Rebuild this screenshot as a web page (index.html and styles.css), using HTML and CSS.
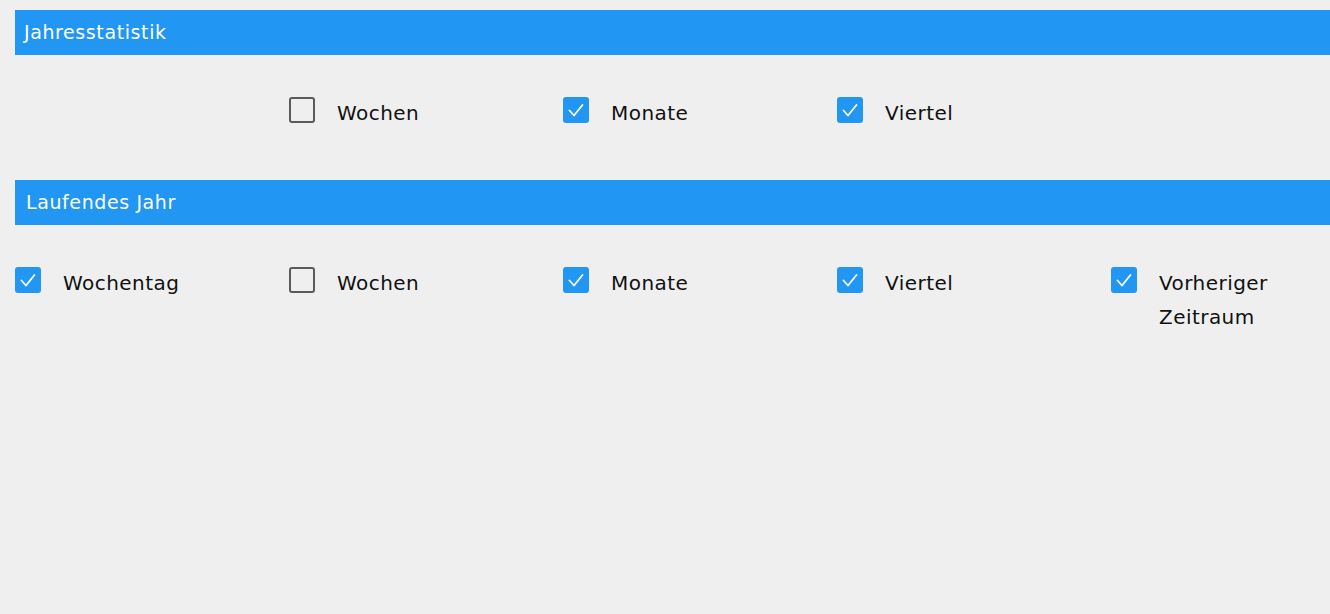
FILE: index.html
```html
<!DOCTYPE html>
<html lang="de">
<head>
<meta charset="utf-8">
<title>Statistik</title>
<link rel="stylesheet" href="styles.css">
</head>
<body>
<div class="page">
  <section class="section">
    <h2 class="section-title">Jahresstatistik</h2>
    <div class="options">
      <div class="option empty"></div>
      <label class="option"><span class="box"></span><span class="label">Wochen</span></label>
      <label class="option"><span class="box checked"><svg viewBox="0 0 26 26"><path d="M6.5 13.5 L11 18.5 L19.5 8"/></svg></span><span class="label">Monate</span></label>
      <label class="option"><span class="box checked"><svg viewBox="0 0 26 26"><path d="M6.5 13.5 L11 18.5 L19.5 8"/></svg></span><span class="label">Viertel</span></label>
    </div>
  </section>
  <section class="section">
    <h2 class="section-title title-alt">Laufendes Jahr</h2>
    <div class="options">
      <label class="option"><span class="box checked"><svg viewBox="0 0 26 26"><path d="M6.5 13.5 L11 18.5 L19.5 8"/></svg></span><span class="label">Wochentag</span></label>
      <label class="option"><span class="box"></span><span class="label">Wochen</span></label>
      <label class="option"><span class="box checked"><svg viewBox="0 0 26 26"><path d="M6.5 13.5 L11 18.5 L19.5 8"/></svg></span><span class="label">Monate</span></label>
      <label class="option"><span class="box checked"><svg viewBox="0 0 26 26"><path d="M6.5 13.5 L11 18.5 L19.5 8"/></svg></span><span class="label">Viertel</span></label>
      <label class="option"><span class="box checked"><svg viewBox="0 0 26 26"><path d="M6.5 13.5 L11 18.5 L19.5 8"/></svg></span><span class="label">Vorheriger Zeitraum</span></label>
    </div>
  </section>
</div>
</body>
</html>
```

FILE: styles.css
```css
html, body {
  margin: 0;
  padding: 0;
  background: #efefef;
  overflow: hidden;
}
body {
  width: 1330px;
  height: 614px;
  font-family: "DejaVu Sans", sans-serif;
  color: #111;
}
.page {
  padding: 10px 0 0 15px;
}
.section-title {
  margin: 0;
  height: 45px;
  line-height: 45px;
  background: #2196f3;
  color: #fff;
  font-size: 19px;
  font-weight: normal;
  padding-left: 9px;
  letter-spacing: 0.6px;
}
.title-alt {
  padding-left: 11px;
}
.options {
  display: grid;
  grid-template-columns: repeat(4, 274px) 1fr;
  padding-top: 42px;
  height: 83px;
}
.option {
  display: flex;
  align-items: flex-start;
  gap: 22px;
}
.box {
  flex: none;
  width: 26px;
  height: 26px;
  box-sizing: border-box;
  border: 2px solid #5a5a5a;
  border-radius: 3px;
}
.box.checked {
  background: #2196f3;
  border: none;
}
.box svg {
  display: block;
  width: 26px;
  height: 26px;
}
.box path {
  fill: none;
  stroke: #fff;
  stroke-width: 1.8;
  stroke-linecap: round;
  stroke-linejoin: round;
}
.label {
  font-size: 20px;
  line-height: 34px;
  letter-spacing: 0.45px;
  margin-top: -1px;
  max-width: 160px;
}
```
